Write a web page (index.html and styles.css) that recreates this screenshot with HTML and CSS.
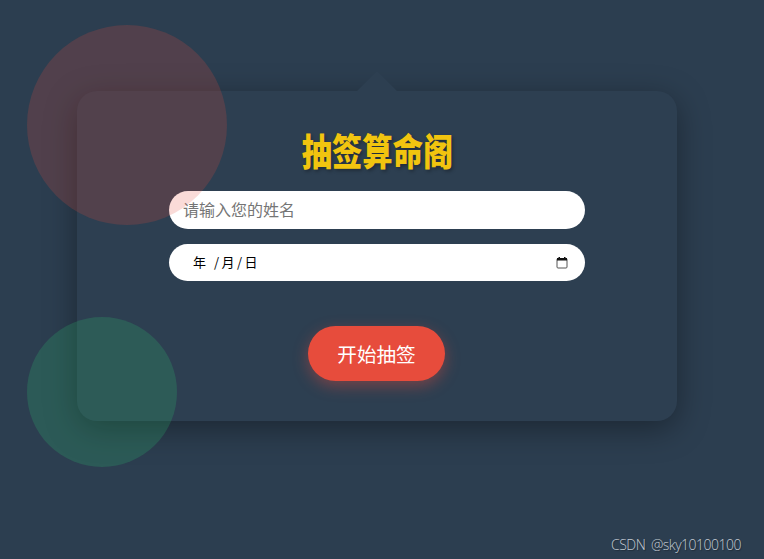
FILE: index.html
```html
<!DOCTYPE html>
<html lang="zh-CN">
<head>
    <meta charset="UTF-8">
    <meta name="viewport" content="width=device-width, initial-scale=1.0">
    <title>抽签算命阁</title>
    <link rel="stylesheet" href="styles.css">
</head>
<body>
    <div class="circle circle-red"></div>
    <div class="circle circle-green"></div>

    <div class="card">
        <h1 class="title">抽签算命阁</h1>
        <input type="text" class="field name-input" placeholder="请输入您的姓名">
        <div class="field date-input">
            <span class="date-text">年 /月/日</span>
            <svg class="date-icon" width="12" height="12" viewBox="0 0 12 12">
                <rect x="1" y="1.5" width="10" height="9.5" rx="1" fill="none" stroke="#555" stroke-width="1"></rect>
                <rect x="1" y="1" width="10" height="2.5" fill="#111"></rect>
                <rect x="2.5" y="0" width="1.5" height="2" fill="#111"></rect>
                <rect x="8" y="0" width="1.5" height="2" fill="#111"></rect>
            </svg>
        </div>
        <button class="start-btn">开始抽签</button>
    </div>

    <div class="watermark">CSDN @sky10100100</div>
</body>
</html>
```

FILE: styles.css
```css
body {
    margin: 0;
    height: 559px;
    box-sizing: border-box;
    padding: 91px 0 0 77px;
    overflow: hidden;
    position: relative;
    background-color: #2c3e50;
    font-family: "Noto Sans CJK SC", "Liberation Sans", sans-serif;
}

.circle {
    position: absolute;
    left: 27px;
    border-radius: 50%;
    z-index: 2;
    pointer-events: none;
}

.circle-red {
    top: 25px;
    width: 200px;
    height: 200px;
    background: rgba(231, 76, 60, 0.2);
}

.circle-green {
    top: 317px;
    width: 150px;
    height: 150px;
    background: rgba(46, 204, 113, 0.2);
}

.card {
    position: relative;
    width: 600px;
    height: 330px;
    box-sizing: border-box;
    padding: 40px 92px;
    display: flex;
    flex-direction: column;
    align-items: center;
    border-radius: 20px;
    background: #2d3f51;
    box-shadow: 0 8px 32px rgba(0, 0, 0, 0.37);
}

.card::before {
    content: "";
    position: absolute;
    top: -20px;
    left: 280px;
    border-left: 20px solid transparent;
    border-right: 20px solid transparent;
    border-bottom: 20px solid #2d3f51;
}

.title {
    margin: 0 0 20px;
    height: 40px;
    line-height: 38px;
    font-size: 37px;
    font-weight: 900;
    color: #f1c40f;
    transform: scaleX(0.82);
    text-shadow: 2px 2px 4px rgba(0, 0, 0, 0.3);
}

.field {
    width: 416px;
    box-sizing: border-box;
    border: none;
    outline: none;
    border-radius: 25px;
    background: white;
}

.name-input {
    height: 38px;
    padding: 0 14px 2px;
    margin-bottom: 15px;
    font-family: inherit;
    font-size: 16px;
}

.name-input::placeholder {
    color: #757575;
}

.date-input {
    height: 37px;
    padding: 0 17px 2px 24px;
    display: flex;
    align-items: center;
    justify-content: space-between;
    font-size: 13px;
    letter-spacing: 2.5px;
    color: black;
}

.date-icon {
    margin-top: 2px;
}

.start-btn {
    margin-top: 45px;
    margin-right: 1px;
    width: 137px;
    height: 55px;
    padding: 0;
    border: none;
    border-radius: 30px;
    background: #e74c3c;
    color: white;
    font-family: inherit;
    font-size: 19.6px;
    box-shadow: 0 5px 15px rgba(231, 76, 60, 0.4);
}

.watermark {
    position: absolute;
    right: 23px;
    bottom: 5px;
    font-family: "Open Sans", sans-serif;
    font-size: 14px;
    font-weight: 300;
    letter-spacing: -0.5px;
    word-spacing: 2.5px;
    color: #c3cad2;
    text-shadow: 1px 1px 1px rgba(0, 0, 0, 0.3);
}
```
